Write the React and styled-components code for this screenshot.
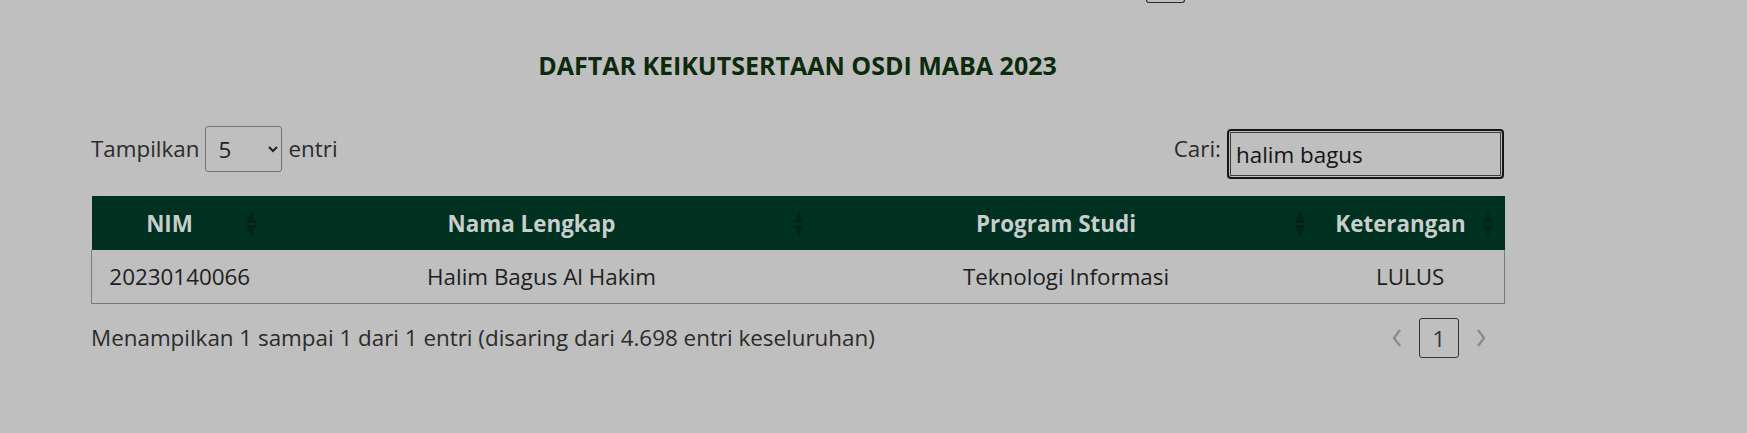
import styled, { createGlobalStyle } from "styled-components"

const GlobalStyle = createGlobalStyle`
  body {
    margin: 0;
    background: #bfbfbf;
    font-family: "Open Sans", "Liberation Sans", sans-serif;
  }
`

//styled components
const Page = styled.div`
  min-height: 433px;
  background: #bfbfbf;
`

const TopStrip = styled.div`
  height: 3px;
  display: flex;
`

const CutBox = styled.div`
  width: 37px;
  height: 2px;
  margin-left: 1146px;
  border: 1.5px solid #2a2a2a;
  border-top: none;
  border-radius: 0 0 4px 4px;
`

const Container = styled.div`
  width: 1413px;
  margin-left: 91px;
`

const Title = styled.h2`
  margin: 45px 0 0;
  text-align: center;
  font-size: 25px;
  line-height: 34px;
  font-weight: 700;
  color: #0c2a0c;
`

const Controls = styled.div`
  margin-top: 44px;
  display: flex;
  justify-content: space-between;
  align-items: flex-start;
  height: 53px;
  font-size: 22.4px;
  color: #2b2b2b;
`

const Group = styled.label`
  display: flex;
  align-items: ${props => props.top ? "flex-start" : "center"};
  gap: 6px;
  line-height: 46px;
`

const Select = styled.select`
  width: 77px;
  height: 46px;
  padding: 0 8px;
  font-family: inherit;
  font-size: 22.4px;
  color: #222;
  background: transparent;
  border: 1px solid #767676;
  border-radius: 3px;
`

const Search = styled.input`
  box-sizing: border-box;
  width: 277px;
  height: 50px;
  margin-top: 3px;
  padding: 0 7px;
  font-family: inherit;
  font-size: 22.4px;
  color: #151515;
  background: transparent;
  border: 2px solid #151515;
  border-radius: 4px;
  box-shadow: inset 0 0 0 1px #bfbfbf, inset 0 0 0 2px #3a3a3a;
  outline: none;
`

const Table = styled.table`
  margin-top: 17px;
  width: 100%;
  border-collapse: collapse;
  table-layout: fixed;
  font-size: 22.4px;
`

const Th = styled.th`
  position: relative;
  height: 54px;
  padding: 0 30px 0 10px;
  background: #00301f;
  color: #c7cecb;
  font-weight: 700;
  text-align: center;
`

const SortIcon = styled.svg`
  position: absolute;
  right: 12px;
  top: 16px;
`

const Td = styled.td`
  height: 53px;
  padding: 0 10px;
  text-align: center;
  color: #1e1e1e;
  border-bottom: 1px solid #7a7a7a;
  border-left: ${props => props.first ? "1px solid #7a7a7a" : "none"};
  border-right: ${props => props.last ? "1px solid #7a7a7a" : "none"};
`

const Footer = styled.div`
  margin-top: 14px;
  display: flex;
  justify-content: space-between;
  align-items: center;
  font-size: 22.4px;
  color: #2b2b2b;
`

const Info = styled.span`
  padding-bottom: 2px;
`

const Pager = styled.div`
  display: flex;
  align-items: center;
  gap: 2px;
  margin-right: 3px;
`

const Arrow = styled.div`
  width: 40px;
  height: 40px;
  display: flex;
  align-items: center;
  justify-content: center;
`

const PageBtn = styled.div`
  box-sizing: border-box;
  width: 40px;
  height: 40px;
  display: flex;
  align-items: center;
  justify-content: center;
  border: 1px solid #333;
  border-radius: 3px;
  color: #333;
`

const Sort = () => (
  <SortIcon width="10" height="24" viewBox="0 0 10 24">
    <path d="M5 0 L10 11 L0 11 Z" fill="rgba(0,0,0,0.25)" />
    <path d="M5 24 L10 13 L0 13 Z" fill="rgba(0,0,0,0.25)" />
  </SortIcon>
)

const Chevron = ({ dir }) => (
  <svg width="12" height="20" viewBox="0 0 12 20">
    <path
      d={dir === "left" ? "M9 2 L3 10 L9 18" : "M3 2 L9 10 L3 18"}
      fill="none"
      stroke="#8c8c8c"
      strokeWidth="2.4"
    />
  </svg>
)

const columns = ["NIM", "Nama Lengkap", "Program Studi", "Keterangan"]
const widths = [176, 548, 501, 188]
const row = ["20230140066", "Halim Bagus Al Hakim", "Teknologi Informasi", "LULUS"]

export default function App() {
  return (
    <Page>
      <GlobalStyle />
      <TopStrip>
        <CutBox />
      </TopStrip>
      <Container>
        <Title>DAFTAR KEIKUTSERTAAN OSDI MABA 2023</Title>
        <Controls>
          <Group>
            Tampilkan
            <Select defaultValue="5">
              <option value="5">5</option>
              <option value="10">10</option>
              <option value="25">25</option>
            </Select>
            entri
          </Group>
          <Group top>
            Cari:
            <Search defaultValue="halim bagus" />
          </Group>
        </Controls>
        <Table>
          <colgroup>
            {widths.map((w, i) => <col key={i} style={{ width: w }} />)}
          </colgroup>
          <thead>
            <tr>
              {columns.map(c => (
                <Th key={c}>
                  {c}
                  <Sort />
                </Th>
              ))}
            </tr>
          </thead>
          <tbody>
            <tr>
              {row.map((v, i) => (
                <Td key={i} first={i === 0} last={i === row.length - 1}>{v}</Td>
              ))}
            </tr>
          </tbody>
        </Table>
        <Footer>
          <Info>Menampilkan 1 sampai 1 dari 1 entri (disaring dari 4.698 entri keseluruhan)</Info>
          <Pager>
            <Arrow><Chevron dir="left" /></Arrow>
            <PageBtn>1</PageBtn>
            <Arrow><Chevron dir="right" /></Arrow>
          </Pager>
        </Footer>
      </Container>
    </Page>
  )
}
